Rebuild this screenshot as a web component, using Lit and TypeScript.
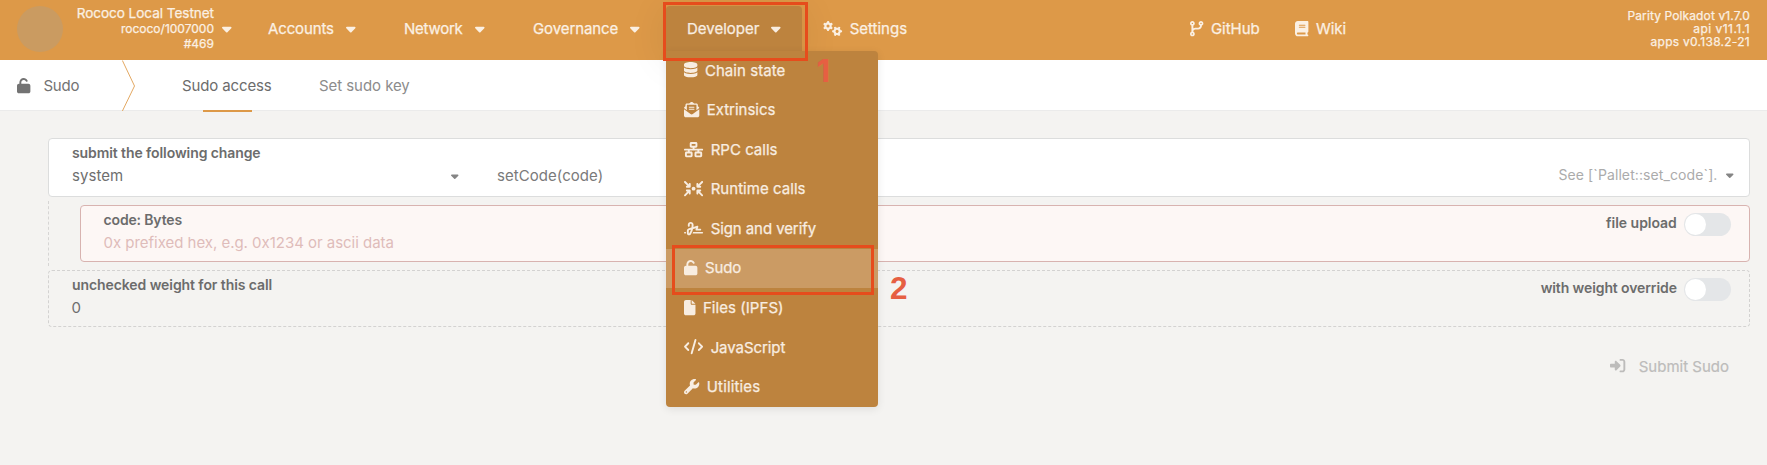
import {LitElement, html, css, svg} from 'lit';
import {customElement, property} from 'lit/decorators.js';
import {classMap} from 'lit/directives/class-map.js';

const arrow = svg`<path d="M9.4 9.4C21.9-3.1 42.1-3.1 54.6 9.4L160 114.7V96c0-17.7 14.3-32 32-32s32 14.3 32 32v96c0 4.3-.9 8.5-2.4 12.2c-1.6 3.7-3.8 7.3-6.9 10.3l-.1 .1c-3.1 3-6.6 5.3-10.3 6.9c-3.8 1.6-7.9 2.4-12.2 2.4H96c-17.7 0-32-14.3-32-32s14.3-32 32-32h18.7L9.4 54.6C-3.1 42.1-3.1 21.9 9.4 9.4z"/>`;

const gear = (cx: number, cy: number, turn: number) => svg`
  <g transform="translate(${cx} ${cy}) rotate(${turn})">
    <circle r="88" fill="none" stroke="currentColor" stroke-width="72"/>
    ${[0, 60, 120, 180, 240, 300].map(a => svg`<rect x="-34" y="-166" width="68" height="70" rx="14" transform="rotate(${a})"/>`)}
  </g>`;

const path = (d: string) => svg`<path d=${d}/>`;

const ICONS: Record<string, {w: number; body: unknown}> = {
  caret: {w: 320, body: path('M137.4 374.6c12.5 12.5 32.8 12.5 45.3 0l128-128c9.2-9.2 11.9-22.9 6.9-34.9s-16.6-19.8-29.6-19.8L32 192c-12.9 0-24.6 7.8-29.6 19.8s-2.2 25.7 6.9 34.9l128 128z')},
  database: {w: 448, body: path('M448 80v48c0 44.2-100.3 80-224 80S0 172.2 0 128V80C0 35.8 100.3 0 224 0S448 35.8 448 80zM393.2 214.7c20.8-7.4 39.9-16.9 54.8-28.6V288c0 44.2-100.3 80-224 80S0 332.2 0 288V186.1c14.9 11.8 34 21.2 54.8 28.6C99.7 230.7 159.5 240 224 240s124.3-9.3 169.2-25.3zM0 346.1c14.9 11.8 34 21.2 54.8 28.6C99.7 390.7 159.5 400 224 400s124.3-9.3 169.2-25.3c20.8-7.4 39.9-16.9 54.8-28.6V432c0 44.2-100.3 80-224 80S0 476.2 0 432V346.1z')},
  envelope: {w: 512, body: path('M215.4 96H144 107.8 96v8.8V144v40.4 89L.2 202.5c1.6-18.1 10.9-34.9 25.7-45.8L48 140.3V96c0-26.5 21.5-48 48-48h76.6l49.9-36.9C232.2 3.9 243.9 0 256 0s23.8 3.9 33.5 11L339.4 48H416c26.5 0 48 21.5 48 48v44.3l22.1 16.4c14.8 10.9 24.1 27.7 25.7 45.8L416 273.4v-89V144 104.8 96H404.2 368 296.6 215.4zM0 448V242.1L217.6 403.3c11.1 8.2 24.6 12.7 38.4 12.7s27.3-4.4 38.4-12.7L512 242.1V448c0 35.3-28.7 64-64 64H64c-35.3 0-64-28.7-64-64zM176 160H336c8.8 0 16 7.2 16 16s-7.2 16-16 16H176c-8.8 0-16-7.2-16-16s7.2-16 16-16zm0 64H336c8.8 0 16 7.2 16 16s-7.2 16-16 16H176c-8.8 0-16-7.2-16-16s7.2-16 16-16z')},
  network: {w: 640, body: path('M256 64H384v64H256V64zM240 0c-26.5 0-48 21.5-48 48v96c0 26.5 21.5 48 48 48h48v32H32c-17.7 0-32 14.3-32 32s14.3 32 32 32h96v32H80c-26.5 0-48 21.5-48 48v96c0 26.5 21.5 48 48 48H240c26.5 0 48-21.5 48-48V368c0-26.5-21.5-48-48-48H192V288H448v32H400c-26.5 0-48 21.5-48 48v96c0 26.5 21.5 48 48 48H560c26.5 0 48-21.5 48-48V368c0-26.5-21.5-48-48-48H512V288h96c17.7 0 32-14.3 32-32s-14.3-32-32-32H352V192h48c26.5 0 48-21.5 48-48V48c0-26.5-21.5-48-48-48H240zM96 448V384H224v64H96zm320-64H544v64H416V384z')},
  converge: {w: 640, body: svg`<g>${arrow}</g><g transform="translate(640 0) scale(-1 1)">${arrow}</g><g transform="translate(0 512) scale(1 -1)">${arrow}</g><g transform="translate(640 512) scale(-1 -1)">${arrow}</g><circle cx="320" cy="256" r="64"/>`},
  signature: {w: 640, body: path('M192 128c0-17.7 14.3-32 32-32s32 14.3 32 32v7.8c0 27.7-2.4 55.3-7.1 82.5l-84.4 25.3c-40.6 12.2-68.4 49.6-68.4 92v71.9c0 40 32.5 72.5 72.5 72.5c26 0 50-13.9 62.9-36.5l13.9-24.3c26.8-47 46.5-97.7 58.4-150.5l94.4-28.3-12.5 37.5c-3.3 9.8-1.6 20.5 4.4 28.8s15.7 13.3 26 13.3H544c17.7 0 32-14.3 32-32s-14.3-32-32-32H460.4l18-53.9c3.8-11.3 .9-23.8-7.4-32.4s-20.7-11.8-32.2-8.4L316.4 198.1c2.4-20.7 3.6-41.4 3.6-62.3V128c0-53-43-96-96-96s-96 43-96 96v32c0 17.7 14.3 32 32 32s32-14.3 32-32V128zm-9.2 177l49-14.7c-10.4 33.8-24.5 66.4-42.1 97.2l-13.9 24.3c-1.5 2.6-4.3 4.3-7.4 4.3c-4.7 0-8.5-3.8-8.5-8.5V335.6c0-14.1 9.3-26.6 22.8-30.7zM24 368c-13.3 0-24 10.7-24 24s10.7 24 24 24H64.3c-.2-2.8-.3-5.6-.3-8.5V368H24zm592 48c13.3 0 24-10.7 24-24s-10.7-24-24-24H305.9c-6.7 16.3-14.2 32.3-22.3 48H616z')},
  unlock: {w: 448, body: path('M144 144c0-44.2 35.8-80 80-80c31.9 0 59.4 18.6 72.3 45.7c7.6 16 26.7 22.8 42.6 15.2s22.8-26.7 15.2-42.6C331 33.7 281.5 0 224 0C144.5 0 80 64.5 80 144v48H64c-35.3 0-64 28.7-64 64V448c0 35.3 28.7 64 64 64H384c35.3 0 64-28.7 64-64V256c0-35.3-28.7-64-64-64H144V144z')},
  file: {w: 384, body: path('M0 64C0 28.7 28.7 0 64 0H224V128c0 17.7 14.3 32 32 32H384V448c0 35.3-28.7 64-64 64H64c-35.3 0-64-28.7-64-64V64zm384 64H256V0L384 128z')},
  code: {w: 640, body: path('M392.8 1.2c-17-4.9-34.7 5-39.6 22l-128 448c-4.9 17 5 34.7 22 39.6s34.7-5 39.6-22l128-448c4.9-17-5-34.7-22-39.6zm80.6 120.1c-12.5 12.5-12.5 32.8 0 45.3L562.7 256l-89.4 89.4c-12.5 12.5-12.5 32.8 0 45.3s32.8 12.5 45.3 0l112-112c12.5-12.5 12.5-32.8 0-45.3l-112-112c-12.5-12.5-32.8-12.5-45.3 0zm-306.7 0c-12.5-12.5-32.8-12.5-45.3 0l-112 112c-12.5 12.5-12.5 32.8 0 45.3l112 112c12.5 12.5 32.8 12.5 45.3 0s12.5-32.8 0-45.3L77.3 256l89.4-89.4c12.5-12.5 12.5-32.8 0-45.3z')},
  wrench: {w: 512, body: path('M352 320c88.4 0 160-71.6 160-160c0-15.3-2.2-30.1-6.2-44.2c-3.1-10.8-16.4-13.2-24.3-5.3l-76.8 76.8c-3 3-7.1 4.7-11.3 4.7H336c-8.8 0-16-7.2-16-16V118.6c0-4.2 1.7-8.3 4.7-11.3l76.8-76.8c7.9-7.9 5.4-21.2-5.3-24.3C382.1 2.2 367.3 0 352 0C263.6 0 192 71.6 192 160c0 19.1 3.4 37.5 9.5 54.5L19.9 396.1C7.2 408.8 0 426.1 0 444.1C0 481.6 30.4 512 67.9 512c18 0 35.3-7.2 48-19.9L297.5 310.5c17 6.2 35.4 9.5 54.5 9.5zM80 408a24 24 0 1 1 0 48 24 24 0 1 1 0-48z')},
  branch: {w: 448, body: path('M80 104a24 24 0 1 0 0-48 24 24 0 1 0 0 48zm80-24c0 32.8-19.7 61-48 73.3v87.8c18.8-10.9 40.7-17.1 64-17.1h96c35.3 0 64-28.7 64-64v-6.7C307.7 141 288 112.8 288 80c0-44.2 35.8-80 80-80s80 35.8 80 80c0 32.8-19.7 61-48 73.3V160c0 70.7-57.3 128-128 128H176c-35.3 0-64 28.7-64 64v6.7c28.3 12.3 48 40.5 48 73.3c0 44.2-35.8 80-80 80s-80-35.8-80-80c0-32.8 19.7-61 48-73.3V352 153.3C19.7 141 0 112.8 0 80C0 35.8 35.8 0 80 0s80 35.8 80 80zm232 0a24 24 0 1 0 -48 0 24 24 0 1 0 48 0zM80 456a24 24 0 1 0 0-48 24 24 0 1 0 0 48z')},
  book: {w: 448, body: path('M96 0C43 0 0 43 0 96V416c0 53 43 96 96 96H384h32c17.7 0 32-14.3 32-32s-14.3-32-32-32V384c17.7 0 32-14.3 32-32V32c0-17.7-14.3-32-32-32H384 96zm0 384H352v64H96c-17.7 0-32-14.3-32-32s14.3-32 32-32zm32-240c0-8.8 7.2-16 16-16H336c8.8 0 16 7.2 16 16s-7.2 16-16 16H144c-8.8 0-16-7.2-16-16zm16 48H336c8.8 0 16 7.2 16 16s-7.2 16-16 16H144c-8.8 0-16-7.2-16-16s7.2-16 16-16z')},
  gears: {w: 640, body: svg`${gear(168, 168, 0)}${gear(472, 346, 30)}`},
  enter: {w: 512, body: path('M217.9 105.9L340.7 228.7c7.2 7.2 11.3 17.1 11.3 27.3s-4.1 20.1-11.3 27.3L217.9 406.1c-6.4 6.4-15 9.9-24 9.9c-18.7 0-33.9-15.2-33.9-33.9l0-62.1L32 320c-17.7 0-32-14.3-32-32l0-64c0-17.7 14.3-32 32-32l128 0 0-62.1c0-18.7 15.2-33.9 33.9-33.9c9 0 17.6 3.6 24 9.9zM352 416l64 0c17.7 0 32-14.3 32-32l0-256c0-17.7-14.3-32-32-32l-64 0c-17.7 0-32-14.3-32-32s14.3-32 32-32l64 0c53 0 96 43 96 96l0 256c0 53-43 96-96 96l-64 0c-17.7 0-32-14.3-32-32s14.3-32 32-32z')},
};

@customElement('app-icon')
class AppIcon extends LitElement {
  @property() name = '';
  @property({type: Number}) size = 15.3;
  static styles = css`
    :host { display: block; flex: none; }
    svg { display: block; fill: currentColor; overflow: visible; }
  `;
  render() {
    const {w, body} = ICONS[this.name];
    return html`<svg viewBox="0 0 ${w} 512" width=${(this.size * w) / 512} height=${this.size}>${body}</svg>`;
  }
}

@customElement('app-toggle')
class AppToggle extends LitElement {
  @property() label = '';
  @property({type: Number}) tracking = 0;
  static styles = css`
    :host { display: flex; gap: 7.2px; }
    .label { font-size: 14px; font-weight: 600; line-height: 20px; white-space: nowrap; }
    .track { width: 47px; height: 23px; border-radius: 12px; background: #e4e6e8; box-sizing: border-box; padding: 1px; }
    .knob { width: 21px; height: 21px; border-radius: 50%; background: #fff; }
  `;
  render() {
    return html`<span class="label" style="letter-spacing:${this.tracking}px">${this.label}</span>
      <span class="track"><div class="knob"></div></span>`;
  }
}

const MENU: {icon: string; text: string; tracking: number; active?: boolean}[] = [
  {icon: 'database', text: 'Chain state', tracking: 0.066},
  {icon: 'envelope', text: 'Extrinsics', tracking: -0.03},
  {icon: 'network', text: 'RPC calls', tracking: 0.023},
  {icon: 'converge', text: 'Runtime calls', tracking: 0.047},
  {icon: 'signature', text: 'Sign and verify', tracking: -0.08},
  {icon: 'unlock', text: 'Sudo', tracking: -0.12, active: true},
  {icon: 'file', text: 'Files (IPFS)', tracking: 0.05},
  {icon: 'code', text: 'JavaScript', tracking: -0.07},
  {icon: 'wrench', text: 'Utilities', tracking: 0.15},
];

@customElement('app-root')
class AppRoot extends LitElement {
  static styles = css`
    :host {
      display: block; position: relative; height: 465px; overflow: hidden;
      background: #f4f3f1; color: #6e6e6e;
      font-family: Inter, "Liberation Sans", sans-serif; font-size: 15px;
      white-space: nowrap;
    }
    header {
      height: 60px; box-sizing: border-box; padding-right: 17px;
      background: #dd9948; color: #fbf0e3;
      -webkit-text-stroke: .25px currentColor;
      display: grid; align-items: center;
      grid-template-rows: 57px;
      grid-template-columns: 63px 151px 54px 136px 129px 133px 136px 388px 105px 1fr auto;
    }
    .logo { width: 46px; height: 46px; margin-left: 17px; border-radius: 50%; background: #ca9b61; }
    .chain { text-align: right; font-size: 12px; line-height: 15px; }
    .chain .name { font-size: 13.6px; letter-spacing: -.06px; }
    .chain-caret { padding-left: 8px; }
    .nav { display: flex; align-items: center; gap: 12px; }
    .link { display: flex; align-items: center; gap: 7.5px; }
    .settings { padding-left: 21px; }
    .versions { text-align: right; font-size: 12px; line-height: 13px; }
    .v1 { letter-spacing: .11px; } .v2 { letter-spacing: .48px; } .v3 { letter-spacing: .27px; }
    .t-acc { letter-spacing: -.139px; } .t-net { letter-spacing: -.24px; } .t-gov { letter-spacing: -.097px; }
    .dev {
      position: relative; z-index: 2; align-self: start; box-sizing: border-box;
      margin-top: 6px; height: 51px; padding: 0 0 6px 21px;
      background: #bd833e; border-radius: 4px 4px 0 0; color: #f8ede1;
      box-shadow: 0 4px 40px rgba(0,0,0,.09);
    }
    .menu {
      position: absolute; left: 0; top: 45px; width: 212px; height: 356px;
      background: #bd833e; border-radius: 0 4px 4px 4px;
      box-shadow: 0 2px 8px rgba(0,0,0,.09);
      display: grid; grid-auto-rows: 1fr;
    }
    .item { display: flex; align-items: center; gap: 7.5px; padding: 0 0 1.3px 18px; }
    .item.active { background: #cb9b64; }

    .tabs {
      height: 50px; background: #fff; border-bottom: 1px solid #ebebeb;
      display: grid; grid-template-columns: 122px 60px 137px 1fr; color: #737373;
    }
    .tabs > * { display: flex; align-items: center; height: 51px; }
    .section { padding-left: 17px; gap: 13px; }
    .section span { letter-spacing: -.18px; }
    .tab { color: #6c6c6c; letter-spacing: -.13px; }
    .tab.on { flex-direction: column; align-items: flex-start; height: 52px; }
    .tab.on .txt { line-height: 51px; height: 50px; }
    .tab.on .bar { width: 49px; height: 2px; margin-left: 21px; background: #dd9948; }
    .tab.off { color: #8c8c8c; letter-spacing: -.06px; }
    .chev { display: block; }

    main { padding: 27px 17px 0 48px; display: flex; flex-direction: column; }
    .box { box-sizing: border-box; border: 1px solid #dcdddd; border-radius: 4px; padding: 5px 0 0 23px; }
    .call {
      height: 59px; background: #fff; padding-right: 16px;
      display: grid; grid-template-columns: 379px 8px 38px 1fr auto; grid-template-rows: 18px 27px;
      align-items: center;
    }
    .label { font-size: 14px; font-weight: 600; line-height: 18px; color: #6c6c6c; }
    .call .label { grid-column: 1 / -1; letter-spacing: -.09px; }
    .system { letter-spacing: .046px; padding-bottom: 1px; }
    .method { grid-column: 4; color: #7a7a7a; letter-spacing: .05px; padding-bottom: 1px; }
    .see { display: flex; align-items: center; gap: 8px; color: #ababab; font-size: 14px; letter-spacing: .1px; height: 24px; align-self: start; }
    .tri { color: #858585; padding-top: 1px; }
    .see .tri { padding-top: 2px; }
    .nested { margin-top: 4px; padding: 4px 0; border-left: 1px dashed #d6d5d4; padding-left: 31px; height: 57px; }
    .bytes {
      height: 57px; background: #fdf7f5; border-color: #d8b3b0; padding-right: 18px;
      padding-left: 22.5px; display: flex; justify-content: space-between;
    }
    .bytes .label { letter-spacing: -.15px; }
    .ph { line-height: 27px; color: #dfbcba; letter-spacing: -.027px; }
    .weight {
      height: 57px; margin-top: 4px; border: 1px dashed #d3d2d1; padding-right: 18px;
      display: flex; justify-content: space-between;
    }
    .weight .label { letter-spacing: -.083px; }
    .zero { line-height: 27px; margin-left: -.6px; }
    app-toggle { margin-top: 2px; color: #6c6c6c; }
    .submit {
      align-self: flex-end; display: flex; align-items: center; gap: 13.5px;
      height: 30px; margin: 24px 21px 0 0; color: #bdbcbb;
      -webkit-text-stroke: .2px currentColor;
    }

    .frame { position: absolute; z-index: 5; box-sizing: border-box; border: 3px solid #e64c1c; }
    .f1 { left: 663px; top: 2px; width: 145px; height: 59px; }
    .f2 { left: 672px; top: 245px; width: 202px; height: 50px; }
    .num { position: absolute; z-index: 5; color: #e65f42; font-weight: 700; font-size: 31.5px; line-height: 32px; }
    .n1 { left: 816.5px; top: 55px; }
    .n2 { left: 890px; top: 272px; font-family: "Liberation Sans", sans-serif; }
  `;

  render() {
    return html`
      <header>
        <div class="logo"></div>
        <div class="chain">
          <div class="name">Rococo Local Testnet</div>
          <div>rococo/1007000</div>
          <div>#469</div>
        </div>
        <app-icon class="chain-caret" name="caret"></app-icon>
        <div class="nav"><span class="t-acc">Accounts</span><app-icon name="caret"></app-icon></div>
        <div class="nav"><span class="t-net">Network</span><app-icon name="caret"></app-icon></div>
        <div class="nav"><span class="t-gov">Governance</span><app-icon name="caret"></app-icon></div>
        <div class="nav dev">
          <span>Developer</span><app-icon name="caret"></app-icon>
          <div class="menu">
            ${MENU.map(m => html`
              <div class=${classMap({item: true, active: !!m.active})}>
                <app-icon name=${m.icon}></app-icon>
                <span style="letter-spacing:${m.tracking}px">${m.text}</span>
              </div>`)}
          </div>
        </div>
        <div class="link settings"><app-icon name="gears"></app-icon><span>Settings</span></div>
        <div class="link"><app-icon name="branch"></app-icon><span>GitHub</span></div>
        <div class="link"><app-icon name="book"></app-icon><span>Wiki</span></div>
        <div class="versions">
          <div class="v1">Parity Polkadot v1.7.0</div>
          <div class="v2">api v11.1.1</div>
          <div class="v3">apps v0.138.2-21</div>
        </div>
      </header>

      <nav class="tabs">
        <div class="section"><app-icon name="unlock"></app-icon><span>Sudo</span></div>
        <svg class="chev" width="14" height="51" viewBox="0 0 14 51"><path d="M.4 .5L12.5 26L.4 51" fill="none" stroke="#e3a862" stroke-width="1"/></svg>
        <div class="tab on"><span class="txt">Sudo access</span><span class="bar"></span></div>
        <div class="tab off">Set sudo key</div>
      </nav>

      <main>
        <section class="box call">
          <div class="label">submit the following change</div>
          <span class="system">system</span>
          <app-icon class="tri" name="caret" size="12"></app-icon>
          <span class="method">setCode(code)</span>
          <span class="see">See [\`Pallet::set_code\`].<app-icon class="tri" name="caret" size="12"></app-icon></span>
        </section>
        <div class="nested">
          <section class="box bytes">
            <div>
              <div class="label">code: Bytes</div>
              <div class="ph">0x prefixed hex, e.g. 0x1234 or ascii data</div>
            </div>
            <app-toggle label="file upload" tracking="-0.033"></app-toggle>
          </section>
        </div>
        <section class="box weight">
          <div>
            <div class="label">unchecked weight for this call</div>
            <div class="zero">0</div>
          </div>
          <app-toggle label="with weight override" tracking="-0.108"></app-toggle>
        </section>
        <div class="submit"><app-icon name="enter"></app-icon><span>Submit Sudo</span></div>
      </main>

      <div class="frame f1"></div>
      <div class="frame f2"></div>
      <div class="num n1">1</div>
      <div class="num n2">2</div>
    `;
  }
}
